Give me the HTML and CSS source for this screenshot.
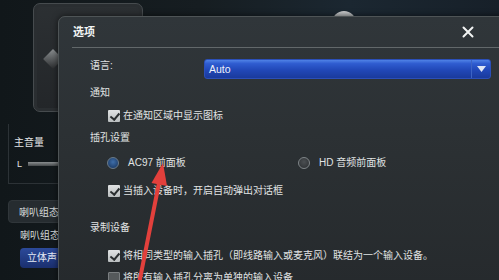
FILE: index.html
```html
<!DOCTYPE html>
<html lang="zh-CN">
<head>
<meta charset="utf-8">
<title>选项</title>
<link rel="stylesheet" href="styles.css">
</head>
<body>
<div class="app">
  <div class="top-area">
    <div class="tile"><div class="tile-gem"></div></div>
    <div class="knob"></div>
  </div>
  <div class="side">
    <div class="vol-panel">
      <div class="side-title">主音量</div>
      <div class="vol-row"><span class="lr">L</span><span class="slider"></span></div>
    </div>
    <div class="tab-panel">喇叭组态</div>
    <div class="side-label">喇叭组态</div>
    <div class="side-btn">立体声</div>
  </div>
</div>

<div class="dialog">
  <div class="dlg-head">
    <span class="dlg-title">选项</span>
    <svg class="close" width="12" height="12" viewBox="0 0 12 12"><path d="M1.5 1.5 L10.5 10.5 M10.5 1.5 L1.5 10.5" stroke="#f2f4f4" stroke-width="2" stroke-linecap="round"/></svg>
  </div>
  <div class="dlg-sep"></div>
  <div class="dlg-body">
    <div class="row lang-row">
      <span class="label">语言:</span>
      <div class="select">
        <span class="select-val">Auto</span>
        <span class="select-btn"><svg width="9" height="6" viewBox="0 0 9 6"><path d="M0 0 H9 L4.5 6 Z" fill="#dfe6f5"/></svg></span>
      </div>
    </div>
    <div class="row sec r-notify">通知</div>
    <div class="row opt r-cb1"><span class="cb on"></span>在通知区域中显示图标</div>
    <div class="row sec r-jack">插孔设置</div>
    <div class="row radios">
      <div class="radio-item"><span class="radio on"></span>AC97 前面板</div>
      <div class="radio-item"><span class="radio"></span>HD 音频前面板</div>
    </div>
    <div class="row opt r-cb2"><span class="cb on"></span>当插入设备时，开启自动弹出对话框</div>
    <div class="row sec r-rec">录制设备</div>
    <div class="row opt r-cb3"><span class="cb on"></span>将相同类型的输入插孔（即线路输入或麦克风）联结为一个输入设备。</div>
    <div class="row opt r-cb4"><span class="cb"></span>将所有输入插孔分离为单独的输入设备</div>
  </div>
</div>

<svg class="arrow" width="499" height="280" viewBox="0 0 499 280">
  <path d="M139 284 L159 183" stroke="#e2403c" stroke-width="4" stroke-linecap="round"/>
  <polygon points="163,163 151.5,183 167,186" fill="#e2403c"/>
</svg>
</body>
</html>
```

FILE: styles.css
```css
html, body {
  margin: 0;
  padding: 0;
}
body {
  width: 499px;
  height: 280px;
  overflow: hidden;
  position: relative;
  background: #13191d;
  font-family: "Liberation Sans", "Noto Sans CJK SC", sans-serif;
  color: #e0e3e3;
  font-size: 10px;
}

/* background application */
.app {
  width: 499px;
  height: 280px;
  display: flex;
  flex-direction: column;
  background: linear-gradient(90deg, #11171a 0%, #161d21 40%, #1b2731 70%, #172029 100%);
}
.top-area {
  height: 124px;
  position: relative;
}
.tile {
  margin: 3px 0 0 33px;
  width: 108px;
  height: 107px;
  border: 1px solid #464b4e;
  border-radius: 7px;
  background: linear-gradient(180deg, #2c3033, #232629);
  box-shadow: inset 0 0 0 3px #2a2e31;
}
.tile-gem {
  margin: 48px 0 0 12px;
  width: 14px;
  height: 14px;
  transform: rotate(45deg);
  background: linear-gradient(135deg, #8a8e90, #2a2c2e);
}
.knob {
  position: absolute;
  left: 332px;
  top: 11px;
  width: 24px;
  height: 16px;
  border-radius: 12px 12px 0 0;
  background: linear-gradient(180deg, #c9cbcc, #7e8284);
}
.side {
  display: flex;
  flex-direction: column;
  padding-left: 8px;
}
.vol-panel {
  width: 60px;
  height: 60px;
  border-left: 1px solid #2c3236;
  border-bottom: 1px solid #2c3236;
  padding: 12px 0 0 5px;
  box-sizing: border-box;
}
.side-title {
  color: #e2e5e6;
  line-height: 14px;
}
.vol-row {
  display: flex;
  align-items: center;
  gap: 6px;
  margin-top: 9px;
  padding-left: 3px;
}
.lr {
  color: #e2e5e6;
  font-size: 9px;
}
.slider {
  width: 31px;
  height: 4px;
  background: linear-gradient(180deg, #8a8e90, #44484a);
}
.tab-panel {
  margin-top: 16px;
  width: 60px;
  height: 23px;
  line-height: 23px;
  padding-left: 10px;
  box-sizing: border-box;
  background: #262c30;
  border: 1px solid #30363a;
  border-radius: 4px 0 0 4px;
  color: #d4d8d9;
}
.side-label {
  margin: 6px 0 0 12px;
  line-height: 14px;
  color: #d4d8d9;
}
.side-btn {
  margin: 5px 0 0 12px;
  width: 44px;
  height: 20px;
  line-height: 20px;
  padding-left: 7px;
  box-sizing: border-box;
  border-radius: 4px;
  background: linear-gradient(180deg, #2c4a9a, #1a2f6e);
  color: #e6ebf5;
}

/* dialog window */
.dialog {
  position: absolute;
  left: 58px;
  top: 16px;
  width: 457px;
  height: 290px;
  box-sizing: border-box;
  border: 1px solid #4e5456;
  border-radius: 7px 7px 0 0;
  background: linear-gradient(180deg, #30363a 0%, #2c3134 40%, #25292c 100%);
  box-shadow: 0 0 6px rgba(0,0,0,0.6);
}
.dlg-head {
  height: 30px;
  display: flex;
  align-items: center;
  justify-content: space-between;
  padding: 0 40px 0 14px;
}
.dlg-title {
  color: #f3f5f5;
  font-size: 11px;
  font-weight: bold;
  line-height: 14px;
}
.close {
  display: block;
}
.dlg-sep {
  margin: 0 14px 0 13px;
  height: 1px;
  background: #62686a;
}
.dlg-body {
  padding: 11px 0 0 31px;
  display: flex;
  flex-direction: column;
}
.row {
  display: flex;
  align-items: center;
  height: 16px;
  line-height: 16px;
  white-space: nowrap;
}
.lang-row {
  height: 20px;
  justify-content: space-between;
  padding-right: 23px;
}
.label {
  margin-top: -6px;
}
.select {
  width: 287px;
  height: 20px;
  box-sizing: border-box;
  display: flex;
  align-items: center;
  justify-content: space-between;
  border-radius: 3px;
  border: 1px solid #2b4fb8;
  background: linear-gradient(180deg, #4f82e6 0%, #2f5cd0 20%, #2148b8 55%, #1a3a9c 100%);
}
.select-val {
  padding-left: 4px;
  font-size: 10.5px;
  color: #eef2fb;
}
.select-btn {
  width: 19px;
  height: 18px;
  display: flex;
  align-items: center;
  justify-content: center;
  border-left: 1px solid #3c63c4;
  box-sizing: border-box;
}
.r-notify { margin-top: 6px; }
.r-cb1 { margin-top: 7px; }
.r-jack { margin-top: 6px; }
.radios { margin-top: 9px; }
.r-cb2 { margin-top: 12px; }
.r-rec { margin-top: 21px; }
.r-cb3 { margin-top: 12px; }
.r-cb4 { margin-top: 6px; }

.opt {
  padding-left: 18px;
}
.cb {
  width: 12px;
  height: 12px;
  box-sizing: border-box;
  margin-right: 3px;
  border-radius: 1px;
  background: linear-gradient(180deg, #e0e2e3, #babebf);
  position: relative;
  flex: none;
}
.cb.on::after {
  content: "";
  position: absolute;
  left: 3.5px;
  top: 0.5px;
  width: 3.5px;
  height: 7px;
  border-right: 2px solid #2a2e30;
  border-bottom: 2px solid #2a2e30;
  transform: rotate(40deg);
}
.cb:not(.on) {
  background: #55595b;
  border: 1px solid #7a7e80;
}
.radios {
  padding-left: 17px;
  display: grid;
  grid-template-columns: 191px auto;
}
.radio-item {
  display: flex;
  align-items: center;
}
.radio {
  width: 12px;
  height: 12px;
  box-sizing: border-box;
  border-radius: 50%;
  border: 1px solid #7f8588;
  background: radial-gradient(circle at 50% 40%, #4b4f52, #2a2d30);
  margin-right: 9px;
  flex: none;
}
.radio.on {
  border: 1.5px solid #6a7a88;
  background: radial-gradient(circle at 50% 40%, #3f6ea8, #14305a);
}

.arrow {
  position: absolute;
  left: 0;
  top: 0;
  pointer-events: none;
}
```
